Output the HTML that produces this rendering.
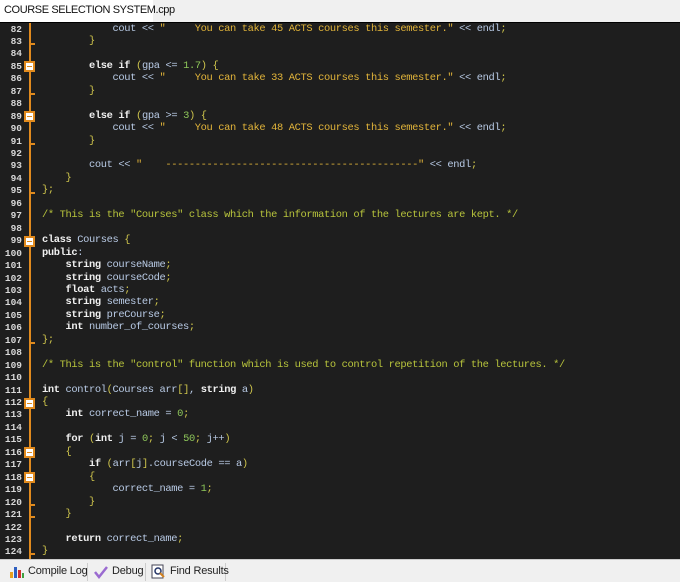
<!DOCTYPE html>
<html><head><meta charset="utf-8"><style>
*{margin:0;padding:0;box-sizing:border-box}
body{width:680px;height:582px;overflow:hidden;background:#f0f0f0;font-family:"Liberation Sans",sans-serif;position:relative}
#tabs{position:absolute;left:0;top:0;width:680px;height:22px;background:#f0f0f0}
#tab{position:absolute;left:0;top:0;width:153px;height:22px;background:#fff;font-size:11px;color:#111;padding:4px 0 0 4px;letter-spacing:-0.4px;white-space:nowrap}
#code{position:absolute;left:0;top:22px;width:680px;height:537px;background:#1e1e1e;border-top:1px solid #000;overflow:hidden}
.ln{position:absolute;left:0;width:22px;text-align:right;font:bold 9.5px "Liberation Mono",monospace;color:#d8d8d8}
.tx{position:absolute;left:42px;white-space:pre;font:10.4px "Liberation Mono",monospace;letter-spacing:-0.36px;color:#b9cbe6}
.k{color:#f0f0f0;font-weight:bold}
.s{color:#e3b53a}.n{color:#8ec75a}.b{color:#cfc54c}.c{color:#b8c43c}
#fold{position:absolute;left:29px;top:0;width:2px;height:537px;background:#e08a1e}
.box{position:absolute;left:24px;width:11px;height:11px;background:#e08a1e}
.box::before{content:"";position:absolute;left:2px;top:2px;width:7px;height:7px;background:#fff}
.box::after{content:"";position:absolute;background:#e08a1e;top:5px;left:3px;width:5px;height:1px}
.tick{position:absolute;left:29px;width:6px;height:2px;background:#e08a1e}
#bot{position:absolute;left:0;top:559px;width:680px;height:23px;background:#f0f0f0;border-top:1px solid #ccc;font-size:11px;color:#222;white-space:nowrap}
.bt{position:absolute;top:3px;height:18px;padding:2px 0 0 22px;border-right:1px solid #ccc;letter-spacing:-0.2px}
</style></head><body>
<div id="tabs"><div id="tab">COURSE SELECTION SYSTEM.cpp</div></div>
<div id="code">
<div id="fold"></div>
<div id="lines"></div>
</div>
<div id="bot">
<div class="bt" style="left:6px;width:82px"><svg style="position:absolute;left:3px;top:1px" width="16" height="15"><rect x="1" y="8" width="3" height="6" fill="#e8a020"/><rect x="5" y="3" width="3" height="11" fill="#3060c0"/><rect x="9" y="6" width="3" height="8" fill="#d03030"/><rect x="13" y="9" width="2" height="5" fill="#40a040"/></svg>Compile Log</div>
<div class="bt" style="left:90px;width:56px"><svg style="position:absolute;left:3px;top:2px" width="16" height="14"><path d="M2 7 L6 12 L14 2" stroke="#9a6ad0" stroke-width="2.5" fill="none"/></svg>Debug</div>
<div class="bt" style="left:148px;width:78px"><svg style="position:absolute;left:3px;top:1px" width="16" height="16"><rect x="1" y="1" width="11" height="13" fill="#fff" stroke="#445"/><circle cx="7" cy="7" r="3" fill="none" stroke="#236" stroke-width="1.5"/><path d="M9 9 L13 13" stroke="#d08020" stroke-width="2"/></svg>Find Results</div>
</div>
<script>
const L=[
[82,'            cout << <span class="s">"     You can take 45 ACTS courses this semester."</span> << endl<span class="b">;</span>'],
[83,'        <span class="b">}</span>'],
[84,''],
[85,'        <span class="k">else if</span> <span class="b">(</span>gpa <= <span class="n">1.7</span><span class="b">) {</span>'],
[86,'            cout << <span class="s">"     You can take 33 ACTS courses this semester."</span> << endl<span class="b">;</span>'],
[87,'        <span class="b">}</span>'],
[88,''],
[89,'        <span class="k">else if</span> <span class="b">(</span>gpa >= <span class="n">3</span><span class="b">) {</span>'],
[90,'            cout << <span class="s">"     You can take 48 ACTS courses this semester."</span> << endl<span class="b">;</span>'],
[91,'        <span class="b">}</span>'],
[92,''],
[93,'        cout << <span class="s">"    -------------------------------------------"</span> << endl<span class="b">;</span>'],
[94,'    <span class="b">}</span>'],
[95,'<span class="b">};</span>'],
[96,''],
[97,'<span class="c">/* This is the "Courses" class which the information of the lectures are kept. */</span>'],
[98,''],
[99,'<span class="k">class</span> Courses <span class="b">{</span>'],
[100,'<span class="k">public</span>:'],
[101,'    <span class="k">string</span> courseName<span class="b">;</span>'],
[102,'    <span class="k">string</span> courseCode<span class="b">;</span>'],
[103,'    <span class="k">float</span> acts<span class="b">;</span>'],
[104,'    <span class="k">string</span> semester<span class="b">;</span>'],
[105,'    <span class="k">string</span> preCourse<span class="b">;</span>'],
[106,'    <span class="k">int</span> number_of_courses<span class="b">;</span>'],
[107,'<span class="b">};</span>'],
[108,''],
[109,'<span class="c">/* This is the "control" function which is used to control repetition of the lectures. */</span>'],
[110,''],
[111,'<span class="k">int</span> control<span class="b">(</span>Courses arr<span class="b">[]</span>, <span class="k">string</span> a<span class="b">)</span>'],
[112,'<span class="b">{</span>'],
[113,'    <span class="k">int</span> correct_name = <span class="n">0</span><span class="b">;</span>'],
[114,''],
[115,'    <span class="k">for</span> <span class="b">(</span><span class="k">int</span> j = <span class="n">0</span><span class="b">;</span> j < <span class="n">50</span><span class="b">;</span> j++<span class="b">)</span>'],
[116,'    <span class="b">{</span>'],
[117,'        <span class="k">if</span> <span class="b">(</span>arr<span class="b">[</span>j<span class="b">]</span>.courseCode == a<span class="b">)</span>'],
[118,'        <span class="b">{</span>'],
[119,'            correct_name = <span class="n">1</span><span class="b">;</span>'],
[120,'        <span class="b">}</span>'],
[121,'    <span class="b">}</span>'],
[122,''],
[123,'    <span class="k">return</span> correct_name<span class="b">;</span>'],
[124,'<span class="b">}</span>']];
const boxes=[85,89,99,112,116,118],ticks=[83,87,91,95,107,120,121,124];
let h='';const LH=12.45,T=0.5;
L.forEach((l,i)=>{const y=T+i*LH;
h+=`<div class="ln" style="top:${y}px">${l[0]}</div><div class="tx" style="top:${y-1}px">${l[1]}</div>`;
if(boxes.includes(l[0]))h+=`<div class="box" style="top:${y+0.5}px"></div>`;
if(ticks.includes(l[0]))h+=`<div class="tick" style="top:${y+7}px"></div>`;});
document.getElementById('lines').innerHTML=h;
</script>
</body></html>
